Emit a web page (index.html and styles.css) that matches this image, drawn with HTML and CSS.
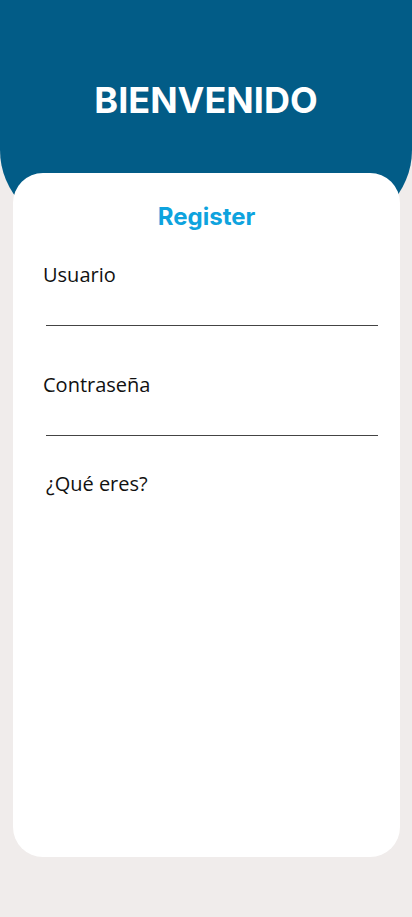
FILE: index.html
```html
<!DOCTYPE html>
<html lang="es">
<head>
<meta charset="utf-8">
<meta name="viewport" content="width=device-width, initial-scale=1">
<title>Bienvenido</title>
<link rel="stylesheet" href="styles.css">
</head>
<body>
  <header class="hero">
    <h1 class="hero-title">BIENVENIDO</h1>
  </header>
  <main class="card">
    <h2 class="card-title">Register</h2>
    <div class="field">
      <label class="field-label">Usuario</label>
      <div class="field-line"></div>
    </div>
    <div class="field">
      <label class="field-label">Contraseña</label>
      <div class="field-line"></div>
    </div>
    <p class="question">¿Qué eres?</p>
  </main>
</body>
</html>
```
FILE: styles.css
```css
* { box-sizing: border-box; }
html, body { margin: 0; padding: 0; }
body {
  width: 412px;
  height: 917px;
  background: #f0eceb;
  overflow: hidden;
  font-family: "Open Sans", "Noto Sans", sans-serif;
}
.hero {
  height: 228px;
  background: #025c87;
  border-radius: 0 0 78px 78px;
  display: flex;
  justify-content: center;
  padding-top: 80px;
}
.hero-title {
  margin: 0;
  color: #fff;
  font-family: "Inter", "Roboto", sans-serif;
  font-weight: 700;
  font-size: 36px;
  line-height: 40px;
}
.card {
  margin: -55px 12px 0 13px;
  height: 684px;
  background: #fff;
  border-radius: 30px;
  padding: 30px 22px 0 30px;
}
.card-title {
  margin: 0 -22px 0 -30px;
  text-align: center;
  color: #0ea3de;
  font-family: "Inter", "Roboto", sans-serif;
  font-weight: 700;
  font-size: 24px;
  line-height: 28px;
}
.field {
  margin-top: 31px;
}
.field + .field { margin-top: 46px; }
.field-label {
  display: block;
  font-size: 20px;
  line-height: 26px;
  color: #111;
}
.field-line {
  margin: 37px 0 0 3px;
  height: 1px;
  background: #444;
}
.question {
  margin: 35px 0 0 3px;
  font-size: 20px;
  line-height: 26px;
  color: #111;
}
```
